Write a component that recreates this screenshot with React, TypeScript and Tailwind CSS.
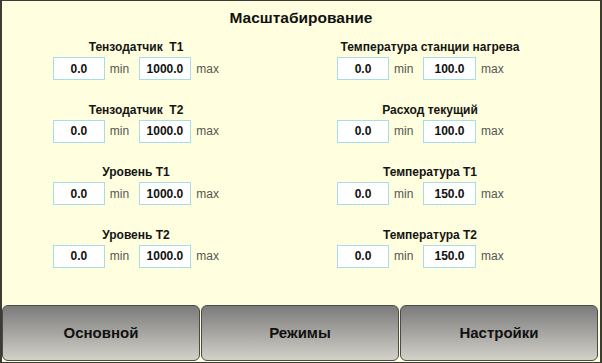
import React from "react";

const font = { fontFamily: '"Liberation Sans", Arial, sans-serif' };

function Field({ label, min, max, width }: { label: string; min: string; max: string; width: string }) {
  return (
    <div className={`flex flex-col ${width}`}>
      <div className="h-[14px] whitespace-pre text-center text-[12px] font-bold leading-[14px] text-[#141414]">{label}</div>
      <div className="mt-[3px] flex h-[23px] items-center">
        <div className="flex h-[23px] w-[52px] items-center justify-center border border-[#a6dde6] bg-white text-[12px] font-bold text-[#111]">
          {min}
        </div>
        <span className="w-[34px] pl-[5px] text-[12px] text-[#555]">min</span>
        <div className="flex h-[23px] w-[53px] items-center justify-center border border-[#a6dde6] bg-white text-[12px] font-bold text-[#111]">
          {max}
        </div>
        <span className="pl-[5px] text-[12px] text-[#555]">max</span>
      </div>
    </div>
  );
}

export default function App() {
  const left = [
    ["Тензодатчик  T1", "0.0", "1000.0"],
    ["Тензодатчик  T2", "0.0", "1000.0"],
    ["Уровень T1", "0.0", "1000.0"],
    ["Уровень T2", "0.0", "1000.0"],
  ];
  const right = [
    ["Температура станции нагрева", "0.0", "100.0"],
    ["Расход текущий", "0.0", "100.0"],
    ["Температура T1", "0.0", "150.0"],
    ["Температура T2", "0.0", "150.0"],
  ];
  return (
    <div
      style={font}
      className="flex h-[363px] w-[602px] flex-col border-b border-l-2 border-r-2 border-t border-[#3c3c34] bg-[#ffffdf]"
    >
      <div className="mt-[8px] h-[18px] text-center text-[15.5px] font-bold leading-[18px] text-[#111]">
        Масштабирование
      </div>
      <div className="mt-[13px] flex pl-[51px]">
        <div className="flex w-[166px] flex-col gap-y-[22.67px]">
          {left.map(([l, a, b]) => (
            <Field key={l} label={l} min={a} max={b} width="w-[166px]" />
          ))}
        </div>
        <div className="ml-[118px] flex w-[186px] flex-col gap-y-[22.67px]">
          {right.map(([l, a, b]) => (
            <Field key={l} label={l} min={a} max={b} width="w-[186px]" />
          ))}
        </div>
      </div>
      <div className="mt-auto mb-[1px] flex h-[56px] gap-[1px] pr-[2px]">
        {["Основной", "Режимы", "Настройки"].map((t) => (
          <div
            key={t}
            className="flex flex-1 items-center justify-center rounded-[6px] border border-[#4a4a48] bg-gradient-to-b from-[#7c7c7c] to-[#d3d1c9] text-[15px] font-bold text-[#111]"
          >
            {t}
          </div>
        ))}
      </div>
    </div>
  );
}
